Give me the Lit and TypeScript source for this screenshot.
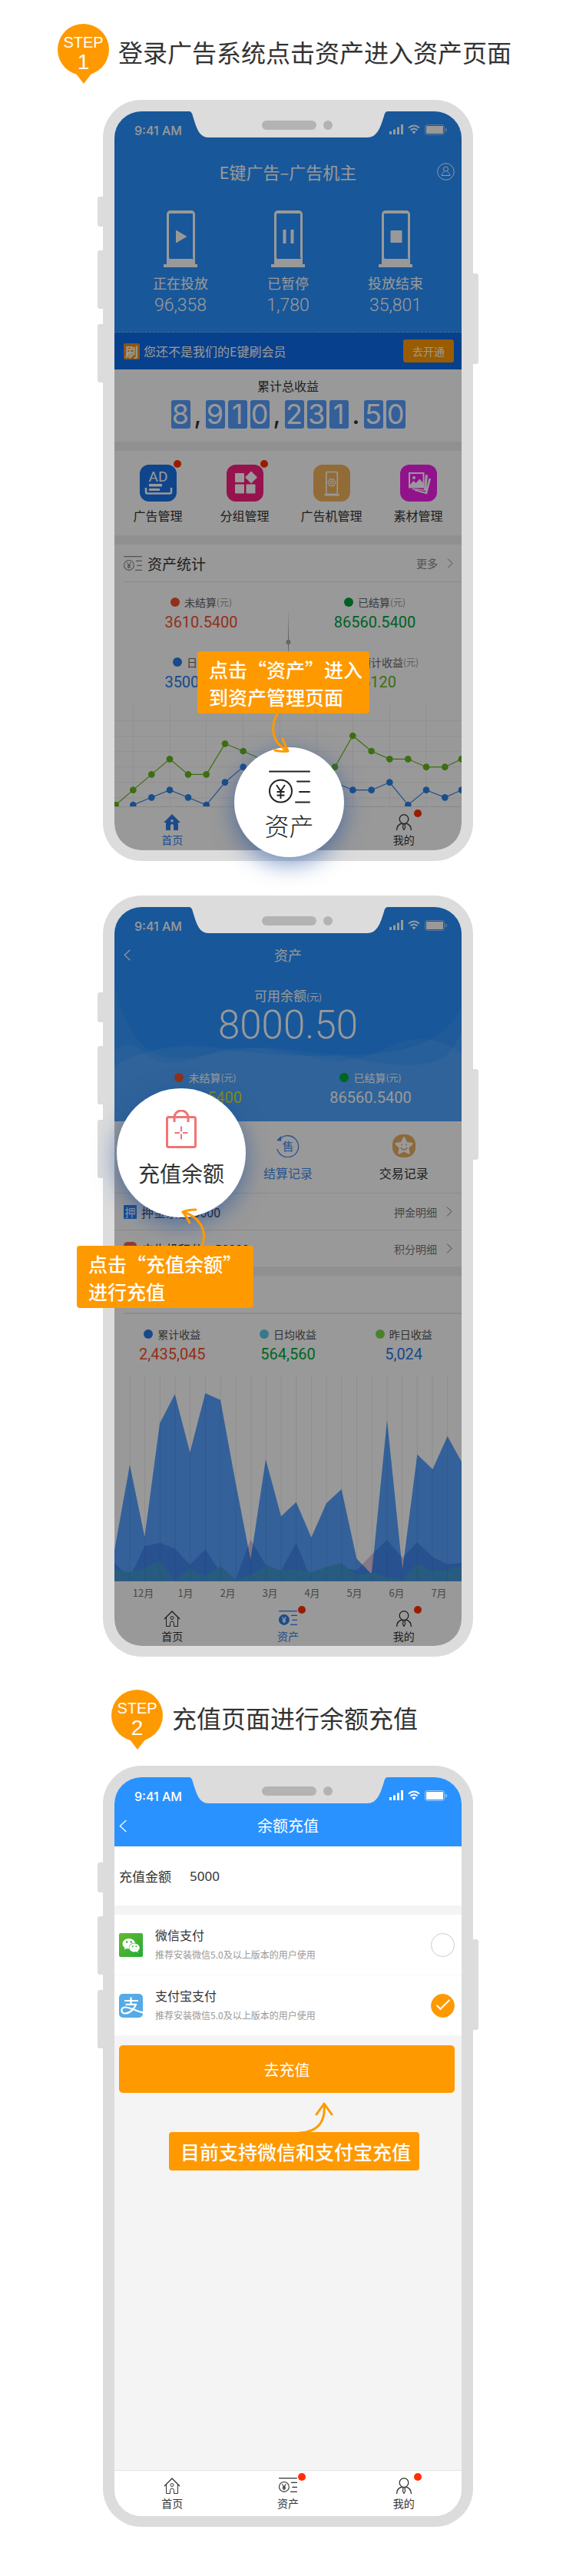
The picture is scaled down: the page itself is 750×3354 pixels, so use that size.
import { LitElement, html, css, svg, nothing } from "lit";
import { customElement, property } from "lit/decorators.js";
import { classMap } from "lit/directives/class-map.js";

const base = css`
  *, *::before, *::after { box-sizing: border-box; }
  :host {
    display: block;
    font-family: "Noto Sans CJK SC", "Noto Sans", sans-serif;
    color: #333;
  }
  a { color: inherit; text-decoration: none; }
  svg { display: block; flex: none; }
  h1, h2, h3, p { margin: 0; font-weight: 400; }
  .num { font-family: Roboto, "Liberation Sans", sans-serif; font-weight: 300; }
`;

/* ---------- icons ---------- */

const assetIcon = (w: number, stroke: number, solid = false) => html`
  <svg width=${w} height=${Math.round(w * 0.8)} viewBox="0 0 54 43" fill="none"
    stroke="currentColor" stroke-width=${stroke} stroke-linecap="round">
    <path d="M1 1.5H53M37 14.5H53M40 28H53M35 41.5H53" />
    <circle cx="15.5" cy="27" r="14.5" fill=${solid ? "currentColor" : "none"} />
    <g stroke=${solid ? "#fff" : "currentColor"} stroke-width=${solid ? 3 : stroke * 0.95}>
      <path d="M10 19l5.500 8 5.500-8M15.500 27v10M10.500 28h10M10.500 32.500h10" stroke-linecap="butt" />
    </g>
  </svg>`;

const homeIcon = (solid: boolean) => solid
  ? html`<svg width="22" height="21" viewBox="0 0 22 21">
      <path fill="currentColor" fill-rule="evenodd"
        d="M11 0L22 11H19V21H13V15a2 2 0 0 0-4 0V21H3V11H0ZM11 7a1.700 1.700 0 1 0 .01 0Z" />
    </svg>`
  : html`<svg width="22" height="21" viewBox="0 0 22 21" fill="none" stroke="currentColor">
      <path d="M1 11L11 1 21 11" stroke-width="1.400" />
      <path d="M3.500 9V20.500H8.500V16.500a2.500 2.500 0 0 1 5 0V20.500H18.500V9" />
      <circle cx="11" cy="9.500" r="2" />
    </svg>`;

const userIcon = html`
  <svg width="22" height="21" viewBox="0 0 22 21" fill="none" stroke="currentColor" stroke-width="1.300">
    <circle cx="11" cy="6.500" r="5.800" />
    <path d="M1.500 21C1.800 16 4.500 13 8.500 12M20.500 21C20.200 16 17.500 13 13.500 12" />
    <path d="M9.300 13h3.400l-.7 2.500 .8 1.500-1.800 3.500-1.800-3.500 .8-1.500Z" stroke-width="1.100" />
  </svg>`;

const chevron = (dir: "left" | "right", w = 8, h = 13) => html`
  <svg width=${w} height=${h} viewBox="0 0 8 13" fill="none" stroke="currentColor" stroke-width="1">
    <path d=${dir === "right" ? "M1 .5L7 6.500 1 12.500" : "M7.500 .5L1 6.500 7.500 12.500"} />
  </svg>`;

const machineGlyph = {
  play: svg`<path d="M16 25.500V42.500L30.500 34Z" fill="#fff" />`,
  pause: svg`<path d="M15.500 25h4v18h-4ZM25.500 25h4v18h-4Z" fill="#fff" />`,
  stop: svg`<rect x="15.500" y="26" width="15" height="16" rx="1" fill="#fff" />`,
};

const machineIcon = (kind: keyof typeof machineGlyph) => html`
  <svg width="44" height="74" viewBox="0 0 44 74">
    <path fill="#fff" fill-rule="evenodd"
      d="M4 5a5 5 0 0 1 5-5H36a5 5 0 0 1 5 5V70h3v4H0V70H4ZM7 5V61a3 3 0 0 0 1 2H37a1 1 0 0 0 1-2V5a1 1 0 0 0-1-1H8a1 1 0 0 0-1 1Z" />
    ${machineGlyph[kind]}
  </svg>`;

const accountIcon = html`
  <svg width="23" height="23" viewBox="0 0 23 23" fill="none" stroke="#fff">
    <circle cx="11.500" cy="11.500" r="10.800" />
    <circle cx="11.500" cy="8" r="3" />
    <path d="M9.800 10.500C9.500 12.500 6 13 6 16.500H17C17 13 13.500 12.500 13.200 10.500" />
  </svg>`;

const tiles = {
  ad: svg`
    <text x="24" y="22" font-size="19" fill="#fff" text-anchor="middle" font-family="Roboto, sans-serif">AD</text>
    <path d="M8 30v5.500a2 2 0 0 0 2 2H39a2 2 0 0 0 2-2V30" fill="none" stroke="#fff" stroke-width="2.500" />
    <path d="M12 25H29v3.500H12ZM12 31H26v3H12Z" fill="#fff" />`,
  group: svg`
    <g fill="#fff"><rect x="11" y="11" width="12" height="12" rx="1" />
    <rect x="11" y="25.500" width="12" height="12" rx="1" />
    <rect x="25.500" y="25.500" width="12" height="12" rx="1" />
    <path d="M32 8.500L40 16.500 32 24.500 24 16.500Z" /></g>`,
  device: svg`
    <g fill="none" stroke="#fff" stroke-width="1.600">
      <rect x="16.800" y="9.500" width="14.500" height="29" rx="1.500" />
      <path d="M14.500 39.500H34" stroke-width="2" />
      <path d="M21.500 18.800h5l2.500 4.400-2.500 4.400h-5L19 23.200Z" stroke-width="1.200" stroke-linejoin="round" />
      <circle cx="24" cy="23.200" r="1.800" stroke-width="1.200" />
    </g>`,
  media: svg`
    <path fill="#fff" fill-rule="evenodd"
      d="M11 10H31.500V30.500H11ZM13 12V26l4.500-5 3 3 5-5.500 4 5V12Z" />
    <circle cx="18" cy="17" r="2" fill="#fff" />
    <path fill="#fff" d="M33 13l3 .5-2 20.500-18-1.500v-1.500l15 1.500ZM37.500 17.500l2.500 1-5 20-16-4.500v-1.500l14 3Z" />`,
};

const bagIcon = html`
  <svg width="40" height="50" viewBox="0 0 40 50" fill="none" stroke="#f07474" stroke-width="3">
    <rect x="1.500" y="9.500" width="37" height="39" rx="2" />
    <path d="M11 16V10a9 9 0 0 1 18 0V16" />
    <path d="M20 21.500v7M20 31.500v7M11.500 30H18M22 30h6.500" stroke-width="2" />
  </svg>`;

const settleIcon = html`
  <svg width="30" height="30" viewBox="0 0 30 30" fill="none" stroke="#3f8cf0" stroke-width="1.300">
    <path d="M4.500 6A14 14 0 1 1 1 19" />
    <path d="M5.500 3.500L1.500 7.500 5.500 8Z" fill="#3f8cf0" />
    <text x="15" y="20.500" font-size="15" fill="#3f8cf0" stroke="none" text-anchor="middle"
      font-family="Noto Sans CJK SC, sans-serif">售</text>
  </svg>`;

const starIcon = html`
  <svg width="30" height="30" viewBox="0 0 30 30">
    <rect width="30" height="30" rx="13" fill="#e8b060" />
    <path fill="#fff" stroke="#fff" stroke-width="2" stroke-linejoin="round"
      d="M15 4L18.300 10.800 25.800 12 20.400 17.300 21.700 24.800 15 21.300 8.300 24.800 9.600 17.300 4.200 12 11.700 10.800Z" />
    <path d="M11 17a4.200 4.200 0 0 0 8 0M12 12.500v2M18 12.500v2" fill="none" stroke="#e8b060" stroke-width="1.500" />
  </svg>`;

const wechatIcon = html`
  <svg width="31" height="31" viewBox="0 0 31 31">
    <defs><linearGradient id="wx" x1="0" y1="0" x2="1" y2="1">
      <stop offset="0" stop-color="#68b82c" /><stop offset="1" stop-color="#22ac38" />
    </linearGradient></defs>
    <rect width="31" height="31" rx="2" fill="url(#wx)" />
    <path fill="#fff" d="M13 7c-5 0-8.500 3-8.500 6.800 0 2.200 1.200 4 3 5.200l-.8 2.500 3-1.500c1 .3 2 .5 3.300.5C12 16 15.500 12.500 21 12.700 20.300 9.300 17 7 13 7Z" />
    <path fill="#fff" d="M20 13.500c-3.800 0-6.700 2.400-6.700 5.500s2.900 5.500 6.700 5.500c.8 0 1.600-.1 2.300-.4l2.400 1.300-.6-2.100c1.500-1 2.600-2.500 2.600-4.300 0-3.100-2.900-5.500-6.700-5.500Z" />
    <g fill="#3fae33"><circle cx="10.200" cy="11.500" r="1.200" /><circle cx="15.800" cy="11.500" r="1.200" />
    <circle cx="17.800" cy="17.300" r="1" /><circle cx="22.300" cy="17.300" r="1" /></g>
  </svg>`;

const alipayIcon = html`
  <svg width="31" height="31" viewBox="0 0 31 31">
    <rect width="31" height="31" rx="5" fill="#55abe8" />
    <g fill="none" stroke="#fff" stroke-width="2.200">
      <path d="M7 9H25M15.500 4.500V13.500M8.500 13.800H22C20.500 19 14 25.500 8 25.500 1.500 25.500 2 17.500 8.500 17.500 15 17.500 20 22 31 24.500" />
    </g>
  </svg>`;

/* ---------- step heading ---------- */

@customElement("step-heading")
class StepHeading extends LitElement {
  @property() step = "";
  @property() text = "";
  static styles = [base, css`
    .row { display: flex; gap: 12px; align-items: flex-start; }
    .badge { display: grid; flex: none; width: 67px; color: #fff; }
    .badge > * { grid-area: 1 / 1; }
    .words {
      display: flex; flex-direction: column; align-items: center; padding-top: 14px;
      font-family: "Liberation Sans", sans-serif; font-size: 20px; line-height: 20px;
    }
    .digit { font-size: 28px; line-height: 32px; }
    h2 { font-size: 32px; line-height: 40px; padding-top: 16px; white-space: nowrap; }
  `];
  render() {
    return html`<div class="row">
      <div class="badge">
        <svg width="67" height="78" viewBox="0 0 67 78" fill="#f90">
          <circle cx="33.500" cy="33.500" r="33.500" /><path d="M24 65L34 78 44 65Z" />
        </svg>
        <div class="words"><span>STEP</span><span class="digit">${this.step}</span></div>
      </div>
      <h2>${this.text}</h2>
    </div>`;
  }
}

/* ---------- phone frame ---------- */

@customElement("phone-frame")
class PhoneFrame extends LitElement {
  @property({ type: Boolean }) dimmed = false;
  static styles = [base, css`
    .body { position: relative; padding: 15px 15px 14px; border-radius: 50px; background: #dcdcdc; }
    .key { position: absolute; left: -7px; width: 8px; border-radius: 3px 0 0 3px; background: #dcdcdc; }
    .k1 { top: 126px; height: 39px; }
    .k2 { top: 196px; height: 76px; }
    .k3 { top: 292px; height: 76px; }
    .power { top: 226px; height: 118px; left: auto; right: -7px; border-radius: 0 3px 3px 0; }
    .screen {
      position: relative; isolation: isolate; display: flex; flex-direction: column; aspect-ratio: 452 / 962;
      overflow: hidden; border-radius: 35px; background: #f4f4f4;
    }
    .status {
      display: grid; grid-template-columns: 1fr 257px 1fr; flex: none; height: 44px;
      background: #2992ff; color: #fff;
    }
    .time {
      padding: 15px 0 0 26px; font-family: Inter, sans-serif; font-size: 16px; font-weight: 500;
      line-height: 20px; white-space: nowrap;
    }
    .notch { position: relative; z-index: 2; }
    .signals { display: flex; justify-content: flex-end; gap: 6px; padding: 17px 19px 0 0; }
    slot:not([name]) { display: flex; flex: 1; flex-direction: column; }
    .shade { position: absolute; inset: 0; z-index: 1; background: rgba(0, 0, 0, 0.4); pointer-events: none; }
  `];
  render() {
    return html`<div class="body">
      <i class="key k1"></i><i class="key k2"></i><i class="key k3"></i><i class="key power"></i>
      <div class="screen">
        <div class="status">
          <span class="time">9:41 AM</span>
          <svg class="notch" width="257" height="34" viewBox="0 0 257 34">
            <path fill="#dcdcdc" d="M0 0Q3 1 4 6C9 22 12 34 25 34H231C244 34 248 22 253 6Q254 1 257 0Z" />
            <rect x="94" y="12" width="71" height="12" rx="6" fill="#b3b3b3" />
            <circle cx="180" cy="18" r="6" fill="#b3b3b3" />
          </svg>
          <div class="signals">
            <svg width="18" height="13" viewBox="0 0 18 13" fill="#fff">
              <path d="M0 9h3v4H0ZM5 6.500h3V13H5ZM10 3.500h3V13H10ZM15 0h3V13H15Z" />
            </svg>
            <svg width="16" height="13" viewBox="0 0 16 13" fill="none" stroke="#fff" stroke-width="2">
              <path d="M1 4.500Q8-1.500 15 4.500M3.500 7.500Q8 3.500 12.500 7.500" />
              <path d="M5.500 9.500Q8 7.500 10.500 9.500L8 12.500Z" fill="#fff" stroke="none" />
            </svg>
            <svg width="29" height="14" viewBox="0 0 29 14">
              <rect x=".5" y=".5" width="25" height="13" rx="3" fill="none" stroke="#fff" opacity=".5" />
              <rect x="2" y="2" width="22" height="10" rx="1" fill="#fff" />
              <path d="M27 4.500Q29 5 29 7T27 9.500Z" fill="#fff" opacity=".5" />
            </svg>
          </div>
        </div>
        <slot></slot>
        ${this.dimmed ? html`<div class="shade"></div>` : nothing}
      </div>
      <slot name="over"></slot>
    </div>`;
  }
}

/* ---------- tab bar ---------- */

@customElement("tab-bar")
class TabBar extends LitElement {
  @property() active = "";
  @property({ type: Boolean }) compact = false;
  static styles = [base, css`
    :host { margin-top: auto; }
    nav {
      display: grid; grid-template-columns: repeat(3, 1fr); padding: 9px 0 7px;
      border-top: 1px solid #e4e4e4; background: #fff;
    }
    nav.compact { padding-bottom: 3px; border-color: #fff; }
    a { display: flex; flex-direction: column; align-items: center; gap: 2px; font-size: 14px; line-height: 20px; }
    .on { color: #2f7ee6; }
    .pic { position: relative; display: flex; align-items: flex-start; height: 21px; }
    .dot {
      position: absolute; top: -6px; left: 50%; margin-left: 13px; width: 10px; height: 10px;
      border-radius: 50%; background: #ff3000;
    }
  `];
  render() {
    const tab = (id: string, label: string, icon: unknown, dot = true) => html`
      <a href="#${id}" class=${classMap({ on: this.active === id })}>
        <span class="pic">${icon}${dot ? html`<i class="dot"></i>` : nothing}</span>${label}
      </a>`;
    return html`<nav class=${classMap({ compact: this.compact })}>
      ${tab("home", "首页", homeIcon(this.active === "home"), false)}
      ${tab("asset", "资产", assetIcon(24, 2.5, this.active === "asset"))}
      ${tab("mine", "我的", userIcon)}
    </nav>`;
  }
}

/* ---------- home screen ---------- */

const walk = (pts: number[][]) => pts.map((p) => p.join(",")).join(" ");

const GREEN = [[92, 915], [160, 857], [232, 796], [303, 736], [375, 796], [446, 796], [519, 676], [590, 705], [660, 736],
  [732, 767], [805, 796], [876, 796], [948, 767], [1018, 645], [1091, 705], [1162, 736], [1234, 736], [1305, 767], [1378, 767], [1443, 736]];
const BLUE = [[160, 915], [232, 886], [303, 857], [375, 886], [446, 915], [519, 827], [590, 767], [660, 796],
  [732, 857], [805, 857], [876, 796], [948, 827], [1018, 857], [1091, 857], [1162, 827], [1234, 915], [1305, 857], [1378, 886], [1443, 857]];

@customElement("home-screen")
class HomeScreen extends LitElement {
  static styles = [base, css`
    :host { display: flex; flex: 1; flex-direction: column; background: #f0f0f0; }
    header { padding: 22px 0 20px; border-bottom: 1px dashed #6ab3ff; background: #2992ff; color: #fff; }
    .bar { display: grid; grid-template-columns: 1fr auto 1fr; align-items: center; padding: 0 9px; }
    .bar h1 { grid-column: 2; font-size: 22px; line-height: 24px; }
    .bar a { justify-self: end; }
    .machines { display: grid; grid-template-columns: repeat(3, 1fr); padding: 39px 16px 0; }
    .machine { display: flex; flex-direction: column; align-items: center; font-size: 18px; line-height: 24px; }
    .machine svg { margin-bottom: 8px; }
    .machine .num { margin-top: 4px; font-size: 23px; line-height: 28px; }
    .vip { display: flex; align-items: center; gap: 5px; height: 48px; padding: 0 10px 0 12px; background: #0c6be9; color: #fff; font-size: 16px; }
    .vip p { flex: 1; }
    .seal {
      width: 21px; height: 21px; border-radius: 2px; background: #f08c1c; font-size: 17px; font-weight: 700;
      line-height: 21px; text-align: center;
    }
    button { height: 30px; padding: 0 12px; border: 0; border-radius: 3px; background: #f90; color: #fff; font: inherit; font-size: 14px; }
    .total { display: flex; flex-direction: column; align-items: center; height: 94px; padding-top: 11px; background: #fff; font-size: 16px; line-height: 20px; }
    .digits { display: flex; gap: 4px; margin-top: 9px; font-family: Inter, sans-serif; font-size: 36px; line-height: 37px; }
    .digits span { width: 12px; text-align: center; }
    .digits .box { width: 25px; border-radius: 3px; background: #579fff; color: #fff; }
    .tiles { display: grid; grid-template-columns: repeat(4, 1fr); height: 110px; margin-top: 12px; padding-top: 18px; background: #fff; }
    .tile { display: flex; flex-direction: column; align-items: center; gap: 8px; font-size: 16px; line-height: 20px; }
    .face { position: relative; border-radius: 12px; }
    .ad { background: #1a74e8; } .group { background: #fa2080; }
    .device { background: #f4b45c; } .media { background: #f020e8; }
    .dot { position: absolute; top: -6px; right: -6px; width: 10px; height: 10px; border-radius: 50%; background: #ff3000; }
    .panel { margin-top: 12px; background: #fff; }
    .head { display: flex; align-items: center; gap: 7px; height: 49px; margin-left: 12px; padding-right: 11px; border-bottom: 1px solid #e4e4e4; color: #888; }
    .head h3 { flex: 1; color: #333; font-size: 19px; }
    .head a { display: flex; align-items: center; gap: 12px; font-size: 14px; }
    .stats { position: relative; display: grid; grid-template-columns: 1fr 1fr; row-gap: 28px; padding: 15px 0 17px; }
    .stat { display: flex; flex-direction: column; align-items: center; gap: 2px; }
    .name { display: flex; align-items: center; color: #666; font-size: 14px; line-height: 22px; }
    .name small { color: #999; font-size: 12px; }
    .name i { width: 12px; height: 12px; margin-right: 6px; border-radius: 50%; background: currentColor; }
    .long { padding-left: 20px; }
    .stat .num { font-size: 20px; line-height: 26px; font-weight: 400; }
    .red { color: #f5502a; } .green { color: #00a13c; } .blue { color: #2a7be4; } .leaf { color: #66b81e; }
    .cross { position: absolute; inset: 30px 114px auto; }
    .cross svg, .chart { width: 100%; height: auto; }
  `];
  render() {
    const machine = (kind: keyof typeof machineGlyph, label: string, n: string) => html`
      <div class="machine">${machineIcon(kind)}<span>${label}</span><span class="num">${n}</span></div>`;
    const tile = (kind: keyof typeof tiles, label: string, dot = false) => html`
      <a class="tile" href="#${kind}"><span class="face ${kind}">
        <svg width="48" height="48" viewBox="0 0 48 48">${tiles[kind]}</svg>
        ${dot ? html`<i class="dot"></i>` : nothing}</span>${label}</a>`;
    const stat = (tone: string, label: string, n: string, long = false) => html`
      <div class="stat">
        <div class=${classMap({ name: true, long })}><i class=${tone}></i>${label}<small>(元)</small></div>
        <span class="num ${tone}">${n}</span>
      </div>`;
    const line = (pts: number[][], color: string) => svg`
      <polyline points=${walk(pts)} fill="none" stroke=${color} stroke-width="3.500" />
      ${pts.map(([x, y]) => svg`<circle cx=${x} cy=${y} r="13" fill=${color} />`)}`;
    return html`
      <header>
        <div class="bar"><h1>E键广告–广告机主</h1><a href="#account" aria-label="账户">${accountIcon}</a></div>
        <div class="machines">
          ${machine("play", "正在投放", "96,358")}${machine("pause", "已暂停", "1,780")}${machine("stop", "投放结束", "35,801")}
        </div>
      </header>
      <div class="vip"><span class="seal">刷</span><p>您还不是我们的E键刷会员</p><button type="button">去开通</button></div>
      <div class="total">
        <span>累计总收益</span>
        <div class="digits">${[..."8,910,231.50"].map((c) => html`<span class=${classMap({ box: /\d/.test(c) })}>${c}</span>`)}</div>
      </div>
      <div class="tiles">
        ${tile("ad", "广告管理", true)}${tile("group", "分组管理", true)}${tile("device", "广告机管理")}${tile("media", "素材管理")}
      </div>
      <div class="panel">
        <div class="head">${assetIcon(24, 2.5)}<h3>资产统计</h3><a href="#more">更多 ${chevron("right")}</a></div>
        <div class="stats">
          ${stat("red", "未结算", "3610.5400")}${stat("green", "已结算", "86560.5400")}
          ${stat("blue", "日均收益", "3500.0000", true)}${stat("leaf", "预计收益", "86120", true)}
          <div class="cross">
            <svg viewBox="0 0 224 100">
              <defs>
                <radialGradient id="fade"><stop offset="0" stop-color="#999" /><stop offset="1" stop-color="#999" stop-opacity="0" /></radialGradient>
              </defs>
              <rect x="0" y="47.500" width="224" height="1" fill="url(#fade)" />
              <rect x="112" y="4" width="1" height="88" fill="url(#fade)" />
              <circle cx="112.500" cy="48" r="3" fill="#aaa" />
            </svg>
          </div>
        </div>
        <svg class="chart" viewBox="87 525 1356 396">
          <g stroke="#f0f0f0" stroke-width="3">
            ${[586, 647, 707, 767, 827, 888].map((y) => svg`<path d="M87 ${y}H1443" />`)}
            ${[160, 303, 446, 590, 733, 876, 1018, 1162, 1305].map((x) => svg`<path d="M${x} 525V921" />`)}
          </g>
          ${line(GREEN, "#66b81e")}${line(BLUE, "#2b82e8")}
        </svg>
      </div>
      <tab-bar active="home"></tab-bar>`;
  }
}

/* ---------- asset screen ---------- */

const MAIN = [[87, 715], [147, 382], [205, 663], [264, 220], [323, 106], [382, 333], [442, 102], [501, 128], [560, 450], [619, 753], [678, 360], [738, 583],
  [797, 527], [856, 665], [915, 532], [974, 477], [1033, 748], [1092, 810], [1152, 206], [1212, 793], [1270, 341], [1330, 399], [1388, 270], [1443, 370]];
const MID = [[87, 766], [147, 822], [205, 700], [264, 686], [323, 709], [382, 772], [442, 711], [501, 803], [560, 830], [619, 674], [678, 773], [738, 795],
  [797, 686], [856, 832], [915, 793], [974, 780], [1033, 794], [1092, 732], [1152, 675], [1212, 745], [1270, 684], [1330, 742], [1388, 770], [1443, 765]];
const LOW = [[87, 788], [147, 802], [205, 786], [264, 756], [323, 832], [382, 786], [442, 815], [501, 777], [560, 830], [619, 811], [678, 776], [738, 795],
  [797, 789], [856, 802], [915, 780], [974, 766], [1033, 812], [1092, 804], [1152, 820], [1212, 829], [1270, 767], [1330, 796], [1388, 791], [1443, 777]];
const area = (pts: number[][]) => `87,835 ${walk(pts)} 1443,835`;

@customElement("asset-screen")
class AssetScreen extends LitElement {
  static styles = [base, css`
    :host { display: flex; flex: 1; flex-direction: column; background: #f0f0f0; }
    header { position: relative; display: flex; flex-direction: column; align-items: center; height: 235px; background: #2992ff; color: #fff; }
    .waves { position: absolute; left: 0; bottom: 0; width: 100%; height: 180px; }
    .bar { display: grid; grid-template-columns: 1fr auto 1fr; align-items: center; align-self: stretch; height: 36px; padding: 0 12px; }
    .bar h1 { font-size: 18px; }
    .bar, .label, .amount, .split { position: relative; }
    .label { margin-top: 23px; font-size: 17px; line-height: 24px; }
    small { font-size: 12px; }
    .amount { font-size: 51px; line-height: 50px; }
    .split { display: grid; grid-template-columns: 1fr 1fr; align-self: stretch; margin-top: 32px; padding: 0 11px; }
    .stat { display: flex; flex-direction: column; align-items: center; gap: 2px; font-size: 14px; line-height: 22px; }
    .name { display: flex; align-items: center; }
    .name i { width: 12px; height: 12px; margin-right: 6px; border-radius: 50%; background: currentColor; }
    .stat .num { font-size: 20px; line-height: 26px; font-weight: 400; }
    .yellow { color: #dbe818; }
    .red { color: #f5502a; } .green { color: #00a838; } .blue { color: #2a7be4; } .cyan { color: #5ec8e4; } .leaf { color: #7bd94a; }
    .actions { display: grid; grid-template-columns: repeat(3, 1fr); height: 94px; padding-top: 17px; border-bottom: 1px solid #e8e8e8; background: #fff; }
    .actions a { display: flex; flex-direction: column; align-items: center; gap: 10px; font-size: 16px; line-height: 20px; }
    .actions .sel { color: #3f8cf0; }
    .line { display: flex; align-items: center; height: 48px; padding: 0 12px; background: #fff; font-size: 16px; }
    .line + .line { height: 47px; }
    .first { border-bottom: 1px solid #e8e8e8; }
    .line p { flex: 1; margin-left: 6px; }
    .line a { display: flex; align-items: center; gap: 12px; color: #777; font-size: 14px; }
    .mark { width: 17px; height: 18px; border-radius: 1px; background: #2080f4; color: #fff; font-size: 14px; line-height: 18px; text-align: center; }
    .gift { border-radius: 5px; background: #f0645a; }
    .panel { display: flex; flex: 1; flex-direction: column; margin-top: 12px; background: #fff; }
    .rule { height: 50px; margin-left: 12px; border-bottom: 2px solid #ececec; }
    .trio { display: grid; grid-template-columns: repeat(3, 1fr); padding: 15px 0 14px; color: #555; }
    .chart { width: 100%; height: auto; }
    .months { display: grid; grid-template-columns: repeat(8, 1fr); padding: 5px 2px 0 10px; color: #777; font-size: 13px; line-height: 20px; text-align: center; }
  `];
  render() {
    const stat = (dot: string, label: unknown, tone: string, n: string) => html`
      <div class="stat"><div class="name"><i class=${dot}></i>${label}</div><span class="num ${tone}">${n}</span></div>`;
    return html`
      <header>
        <svg class="waves" viewBox="0 0 452 180" preserveAspectRatio="none" fill="#fff">
          <path opacity=".06" d="M0 0C12 60 36 95 75 97C120 99 160 80 210 84C300 98 420 105 452 30V180H0Z" />
          <path opacity=".06" d="M0 88C15 74 28 80 40 92C60 108 90 106 130 90C175 74 230 92 290 102C350 96 360 74 395 73C425 72 440 84 452 92V180H0Z" />
          <path opacity=".08" d="M0 108C40 84 90 78 130 84C180 92 240 96 290 94C340 104 380 110 410 104C430 100 440 90 452 62V180H0Z" />
        </svg>
        <div class="bar"><a href="#back" aria-label="返回">${chevron("left", 9, 17)}</a><h1>资产</h1></div>
        <div class="label">可用余额<small>(元)</small></div>
        <div class="amount num">8000.50</div>
        <div class="split">
          ${stat("red", html`未结算<small>(元)</small>`, "yellow", "3610.5400")}
          ${stat("green", html`已结算<small>(元)</small>`, "", "86560.5400")}
        </div>
      </header>
      <div class="actions">
        <a href="#recharge" aria-label="充值余额">${bagIcon}</a>
        <a href="#settle" class="sel">${settleIcon}结算记录</a>
        <a href="#trade">${starIcon}交易记录</a>
      </div>
      <div class="line first"><span class="mark">押</span><p>押金余额 5000</p><a href="#deposit">押金明细 ${chevron("right")}</a></div>
      <div class="line"><span class="mark gift"></span><p>广告机积分：50000</p><a href="#points">积分明细 ${chevron("right")}</a></div>
      <div class="panel">
        <div class="rule"></div>
        <div class="trio">
          ${stat("blue", "累计收益", "red", "2,435,045")}${stat("cyan", "日均收益", "green", "564,560")}${stat("leaf", "昨日收益", "blue", "5,024")}
        </div>
        <svg class="chart" viewBox="87 30 1356 806">
          <clipPath id="peaks"><polygon points=${area(MAIN)} /></clipPath>
          <polygon points=${area(MID)} fill="#dfc6e4" />
          <polygon points=${area(MAIN)} fill="#57a2ff" />
          <polygon points=${area(MID)} fill="#4388ee" clip-path="url(#peaks)" />
          <polygon points=${area(LOW)} fill="#4199d5" />
          ${Array.from({ length: 22 }, (_, i) => svg`<path d="M${147 + i * 59.1} 30V835" stroke="#000" stroke-opacity=".08" stroke-width="3" />`)}
          <path d="M87 834.500H1443" stroke="#3f8ee0" stroke-width="3" />
        </svg>
        <div class="months">${[12, 1, 2, 3, 4, 5, 6, 7].map((m) => html`<span>${m}月</span>`)}</div>
        <tab-bar active="asset" compact></tab-bar>
      </div>`;
  }
}

/* ---------- recharge screen ---------- */

@customElement("recharge-screen")
class RechargeScreen extends LitElement {
  static styles = [base, css`
    :host { display: flex; flex: 1; flex-direction: column; background: #f4f4f4; }
    header { display: grid; grid-template-columns: 1fr auto 1fr; align-items: center; height: 46px; padding: 0 6px 8px; background: #2992ff; color: #fff; }
    h1 { font-size: 20px; line-height: 30px; }
    .money { display: flex; align-items: center; gap: 24px; height: 77px; padding: 0 6px; background: #fff; font-size: 17px; }
    .money input { flex: 1; min-width: 0; padding: 0; border: 0; outline: 0; background: none; color: inherit; font: 17px "Noto Sans", sans-serif; }
    .ways { margin: 12px 0; padding: 0; border: 0; }
    .way { display: flex; align-items: center; height: 79px; padding: 0 9px 0 6px; border-bottom: 1px solid #f8f8f8; background: #fff; }
    .text { flex: 1; margin-left: 16px; font-size: 16px; line-height: 26px; }
    .text small { display: block; color: #999; font-size: 12px; line-height: 26px; }
    input[type="radio"] {
      display: grid; place-items: center; appearance: none; width: 31px; height: 31px; margin: 0;
      border: 1px solid #ccc; border-radius: 50%; background: #fff;
    }
    input[type="radio"]:checked { border-color: #f90; background: #f90; }
    input[type="radio"]:checked::before {
      content: ""; width: 18px; height: 8px; margin-bottom: 6px; border: solid #fff; border-width: 0 0 2px 2px; transform: rotate(-45deg);
    }
    button { height: 62px; margin: 0 9px 0 6px; border: 0; border-radius: 5px; background: #f90; color: #fff; font: inherit; font-size: 20px; }
  `];
  render() {
    const way = (id: string, label: string, icon: unknown, on: boolean) => html`
      <label class="way">${icon}<span class="text">${label}<small>推荐安装微信5.0及以上版本的用户使用</small></span>
        <input type="radio" name="way" value=${id} ?checked=${on} /></label>`;
    return html`
      <header><a href="#back" aria-label="返回">${chevron("left", 10, 17)}</a><h1>余额充值</h1></header>
      <div class="money"><label for="sum">充值金额</label><input id="sum" type="text" value="5000" /></div>
      <fieldset class="ways" aria-label="支付方式">
        ${way("wechat", "微信支付", wechatIcon, false)}${way("alipay", "支付宝支付", alipayIcon, true)}
      </fieldset>
      <button type="button">去充值</button>
      <tab-bar></tab-bar>`;
  }
}

/* ---------- page ---------- */

@customElement("app-root")
class AppRoot extends LitElement {
  static styles = [base, css`
    :host { min-height: 100vh; background: #fff; }
    main { display: flex; flex-direction: column; align-items: center; padding: 31px 0 64px; }
    .lead { width: 100%; max-width: 600px; margin-bottom: 21px; }
    .second { max-width: 482px; padding-left: 11px; margin-top: 43px; }
    phone-frame { width: 100%; max-width: 482px; }
    .next { margin-top: 45px; }
    .lens {
      position: absolute; display: flex; flex-direction: column; align-items: center; border-radius: 50%;
      background: #fff; box-shadow: 0 8px 30px rgba(30, 80, 160, 0.6);
    }
    .asset { left: 171px; bottom: 5px; width: 143px; height: 143px; padding-top: 30px; gap: 10px; color: #222; font-size: 32px; font-weight: 300; line-height: 36px; }
    .pay { left: 18px; top: 251px; width: 168px; height: 168px; padding-top: 28px; gap: 14px; font-size: 28px; line-height: 36px; }
    .tip {
      position: absolute; padding: 5px 9px 4px 15px; border-radius: 4px; background: #f90; color: #fff;
      font-size: 25px; font-weight: 500; line-height: 36px; white-space: nowrap;
    }
    .tip-a { left: 123px; top: 718px; }
    .tip-b { left: -34px; top: 456px; padding-right: 15px; }
    .tip-c { left: 86px; top: 477px; padding: 7px 11px 7px 15px; }
    .arrow { position: absolute; fill: none; stroke: #f90; stroke-width: 3; stroke-linecap: round; stroke-linejoin: round; }
    .arrow-a { left: 96px; top: 80px; }
    .arrow-b { right: 57px; bottom: 80px; }
    .arrow-c { left: 166px; bottom: 48px; }
  `];
  render() {
    return html`<main>
      <step-heading class="lead" step="1" text="登录广告系统点击资产进入资产页面"></step-heading>
      <phone-frame dimmed>
        <home-screen></home-screen>
        <div slot="over" class="lens asset">${assetIcon(54, 2)}<span>资产</span></div>
        <div slot="over" class="tip tip-a" lang="zh-CN">点击“资产”进入<br />到资产管理页面
          <svg class="arrow arrow-a" width="26" height="54" viewBox="0 0 26 54">
            <path d="M9 0C-1 16-1 38 22 50M15 34Q18 42 22 50M5 49Q14 51 22 50" />
          </svg>
        </div>
      </phone-frame>
      <phone-frame class="next" dimmed>
        <asset-screen></asset-screen>
        <div slot="over" class="lens pay">${bagIcon}<span>充值余额</span></div>
        <div slot="over" class="tip tip-b" lang="zh-CN">点击“充值余额”<br />进行充值
          <svg class="arrow arrow-b" width="38" height="50" viewBox="0 0 38 50">
            <path d="M28 49C35 33 28 12 3 5M12 19Q8 11 3 5M20 2Q10 2 3 5" />
          </svg>
        </div>
      </phone-frame>
      <step-heading class="lead second" step="2" text="充值页面进行余额充值"></step-heading>
      <phone-frame>
        <recharge-screen></recharge-screen>
        <div slot="over" class="tip tip-c" lang="zh-CN">目前支持微信和支付宝充值
          <svg class="arrow arrow-c" width="50" height="42" viewBox="0 0 50 42">
            <path d="M4 41C30 40 38 24 36 4M26 17L36 3 46 17" />
          </svg>
        </div>
      </phone-frame>
    </main>`;
  }
}
